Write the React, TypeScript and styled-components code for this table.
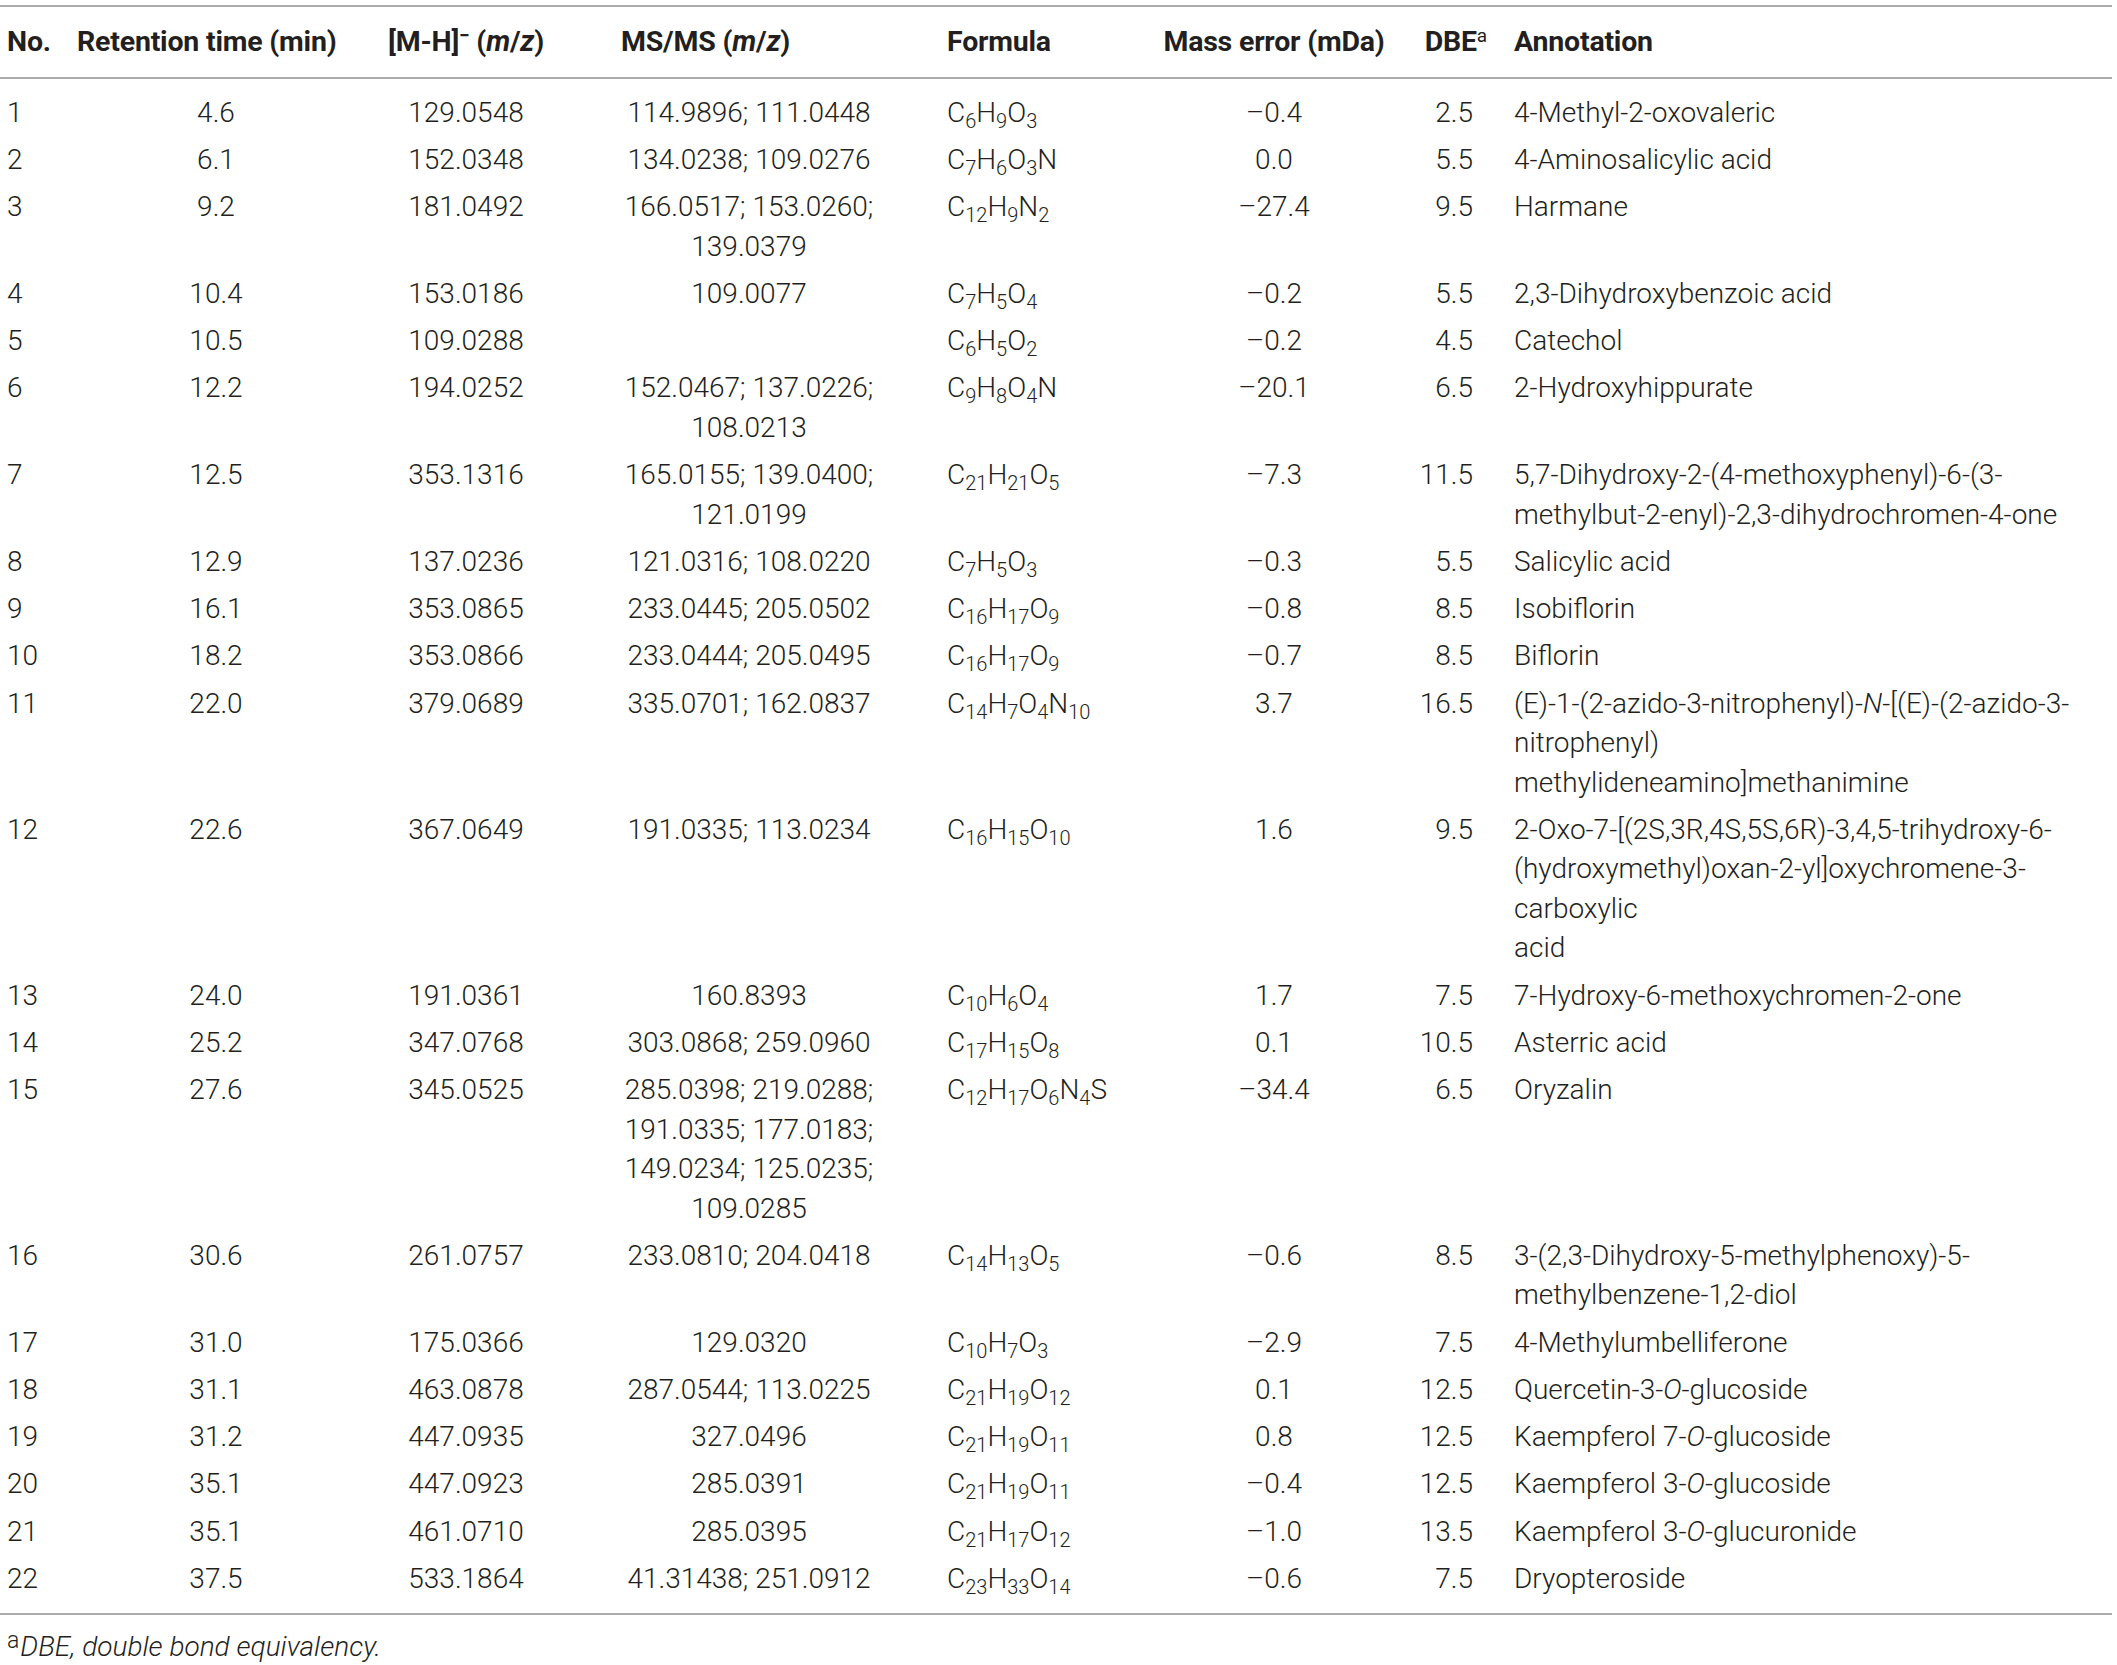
import React from "react";
import styled, { createGlobalStyle } from "styled-components";

const GlobalStyle = createGlobalStyle`
  html, body {
    margin: 0;
    padding: 0;
    background: #ffffff;
  }
  body {
    font-family: Roboto, "Liberation Sans", Arial, sans-serif;
    color: #231f20;
  }
`;

type Row = {
  no: string;
  rt: string;
  mh: string;
  msms: string[];
  formula: string;
  err: string;
  dbe: string;
  annotation: string[];
};

const rows: Row[] = [
  { no: "1", rt: "4.6", mh: "129.0548", msms: ["114.9896; 111.0448"], formula: "C6H9O3", err: "–0.4", dbe: "2.5", annotation: ["4-Methyl-2-oxovaleric"] },
  { no: "2", rt: "6.1", mh: "152.0348", msms: ["134.0238; 109.0276"], formula: "C7H6O3N", err: "0.0", dbe: "5.5", annotation: ["4-Aminosalicylic acid"] },
  { no: "3", rt: "9.2", mh: "181.0492", msms: ["166.0517; 153.0260;", "139.0379"], formula: "C12H9N2", err: "–27.4", dbe: "9.5", annotation: ["Harmane"] },
  { no: "4", rt: "10.4", mh: "153.0186", msms: ["109.0077"], formula: "C7H5O4", err: "–0.2", dbe: "5.5", annotation: ["2,3-Dihydroxybenzoic acid"] },
  { no: "5", rt: "10.5", mh: "109.0288", msms: [""], formula: "C6H5O2", err: "–0.2", dbe: "4.5", annotation: ["Catechol"] },
  { no: "6", rt: "12.2", mh: "194.0252", msms: ["152.0467; 137.0226;", "108.0213"], formula: "C9H8O4N", err: "–20.1", dbe: "6.5", annotation: ["2-Hydroxyhippurate"] },
  { no: "7", rt: "12.5", mh: "353.1316", msms: ["165.0155; 139.0400;", "121.0199"], formula: "C21H21O5", err: "–7.3", dbe: "11.5", annotation: ["5,7-Dihydroxy-2-(4-methoxyphenyl)-6-(3-", "methylbut-2-enyl)-2,3-dihydrochromen-4-one"] },
  { no: "8", rt: "12.9", mh: "137.0236", msms: ["121.0316; 108.0220"], formula: "C7H5O3", err: "–0.3", dbe: "5.5", annotation: ["Salicylic acid"] },
  { no: "9", rt: "16.1", mh: "353.0865", msms: ["233.0445; 205.0502"], formula: "C16H17O9", err: "–0.8", dbe: "8.5", annotation: ["Isobiflorin"] },
  { no: "10", rt: "18.2", mh: "353.0866", msms: ["233.0444; 205.0495"], formula: "C16H17O9", err: "–0.7", dbe: "8.5", annotation: ["Biflorin"] },
  { no: "11", rt: "22.0", mh: "379.0689", msms: ["335.0701; 162.0837"], formula: "C14H7O4N10", err: "3.7", dbe: "16.5", annotation: ["(E)-1-(2-azido-3-nitrophenyl)-*N*-[(E)-(2-azido-3-", "nitrophenyl)", "methylideneamino]methanimine"] },
  { no: "12", rt: "22.6", mh: "367.0649", msms: ["191.0335; 113.0234"], formula: "C16H15O10", err: "1.6", dbe: "9.5", annotation: ["2-Oxo-7-[(2S,3R,4S,5S,6R)-3,4,5-trihydroxy-6-", "(hydroxymethyl)oxan-2-yl]oxychromene-3-", "carboxylic", "acid"] },
  { no: "13", rt: "24.0", mh: "191.0361", msms: ["160.8393"], formula: "C10H6O4", err: "1.7", dbe: "7.5", annotation: ["7-Hydroxy-6-methoxychromen-2-one"] },
  { no: "14", rt: "25.2", mh: "347.0768", msms: ["303.0868; 259.0960"], formula: "C17H15O8", err: "0.1", dbe: "10.5", annotation: ["Asterric acid"] },
  { no: "15", rt: "27.6", mh: "345.0525", msms: ["285.0398; 219.0288;", "191.0335; 177.0183;", "149.0234; 125.0235;", "109.0285"], formula: "C12H17O6N4S", err: "–34.4", dbe: "6.5", annotation: ["Oryzalin"] },
  { no: "16", rt: "30.6", mh: "261.0757", msms: ["233.0810; 204.0418"], formula: "C14H13O5", err: "–0.6", dbe: "8.5", annotation: ["3-(2,3-Dihydroxy-5-methylphenoxy)-5-", "methylbenzene-1,2-diol"] },
  { no: "17", rt: "31.0", mh: "175.0366", msms: ["129.0320"], formula: "C10H7O3", err: "–2.9", dbe: "7.5", annotation: ["4-Methylumbelliferone"] },
  { no: "18", rt: "31.1", mh: "463.0878", msms: ["287.0544; 113.0225"], formula: "C21H19O12", err: "0.1", dbe: "12.5", annotation: ["Quercetin-3-*O*-glucoside"] },
  { no: "19", rt: "31.2", mh: "447.0935", msms: ["327.0496"], formula: "C21H19O11", err: "0.8", dbe: "12.5", annotation: ["Kaempferol 7-*O*-glucoside"] },
  { no: "20", rt: "35.1", mh: "447.0923", msms: ["285.0391"], formula: "C21H19O11", err: "–0.4", dbe: "12.5", annotation: ["Kaempferol 3-*O*-glucoside"] },
  { no: "21", rt: "35.1", mh: "461.0710", msms: ["285.0395"], formula: "C21H17O12", err: "–1.0", dbe: "13.5", annotation: ["Kaempferol 3-*O*-glucuronide"] },
  { no: "22", rt: "37.5", mh: "533.1864", msms: ["41.31438; 251.0912"], formula: "C23H33O14", err: "–0.6", dbe: "7.5", annotation: ["Dryopteroside"] },
];

const Page = styled.div`
  padding-top: 5px;
  width: 2112px;
`;

const Table = styled.table`
  width: 2112px;
  border-collapse: collapse;
  table-layout: fixed;
  font-size: 28px;
  font-weight: 300;
  line-height: 39.5px;
  color: #231f20;
`;

const Head = styled.thead`
  border-top: 2px solid #a9abae;
  border-bottom: 2px solid #a9abae;
`;

type Align = "left" | "center" | "right";

const Th = styled.th<{ $align?: Align; $pl?: number; $pr?: number }>`
  font-weight: 700;
  font-size: 28.5px;
  white-space: nowrap;
  text-align: ${(p) => p.$align ?? "left"};
  padding: 15px ${(p) => p.$pr ?? 0}px 15.5px ${(p) => p.$pl ?? 0}px;
  vertical-align: middle;
  letter-spacing: -0.2px;
`;

const Body = styled.tbody`
  border-bottom: 2px solid #a9abae;
  & > tr:first-child > td {
    padding-top: 13.5px;
  }
  & > tr:last-child > td {
    padding-bottom: 15px;
  }
`;

const Td = styled.td<{ $align?: Align; $pl?: number; $pr?: number }>`
  white-space: nowrap;
  text-align: ${(p) => p.$align ?? "left"};
  vertical-align: top;
  padding: 3.875px ${(p) => p.$pr ?? 0}px 3.875px ${(p) => p.$pl ?? 0}px;
`;

const Sup = styled.sup<{ $hang?: number }>`
  font-size: 19px;
  line-height: 0;
  vertical-align: 9px;
  margin-right: ${(p) => (p.$hang ? -p.$hang : 0)}px;
  font-weight: ${(p) => (p.$hang ? 400 : "inherit")};
`;

const NoteMark = styled.sup`
  font-size: 23px;
  font-weight: 300;
  line-height: 0;
  vertical-align: 8px;
  margin-right: 1px;
`;

const Sub = styled.sub`
  font-size: 20px;
  line-height: 0;
  vertical-align: -6px;
`;

const Em = styled.i`
  font-style: italic;
`;

const Footnote = styled.p`
  margin: 0;
  padding: 12px 0 0 7px;
  font-size: 28px;
  font-weight: 300;
  line-height: 39.5px;
  color: #231f20;
`;

const FootItalic = styled.span`
  font-style: italic;
`;

function Formula({ value }: { value: string }) {
  const parts = Array.from(value.matchAll(/([A-Z][a-z]?)(\d*)/g));
  return (
    <>
      {parts.map((m, i) => (
        <React.Fragment key={i}>
          {m[1]}
          {m[2] ? <Sub>{m[2]}</Sub> : null}
        </React.Fragment>
      ))}
    </>
  );
}

function Rich({ text }: { text: string }) {
  const segs = text.split("*");
  return (
    <>
      {segs.map((s, i) => (i % 2 === 1 ? <Em key={i}>{s}</Em> : <React.Fragment key={i}>{s}</React.Fragment>))}
    </>
  );
}

function Lines({ lines, rich }: { lines: string[]; rich?: boolean }) {
  return (
    <>
      {lines.map((l, i) => (
        <React.Fragment key={i}>
          {i > 0 ? <br /> : null}
          {rich ? <Rich text={l} /> : l}
        </React.Fragment>
      ))}
    </>
  );
}

export default function App() {
  return (
    <Page>
      <GlobalStyle />
      <Table>
        <colgroup>
          <col style={{ width: 77 }} />
          <col style={{ width: 278 }} />
          <col style={{ width: 222 }} />
          <col style={{ width: 344 }} />
          <col style={{ width: 233 }} />
          <col style={{ width: 240 }} />
          <col style={{ width: 120 }} />
          <col style={{ width: 598 }} />
        </colgroup>
        <Head>
          <tr>
            <Th $pl={7}>No.</Th>
            <Th>Retention time (min)</Th>
            <Th $align="center">
              [M-H]<Sup>−</Sup> (<Em>m</Em>/<Em>z</Em>)
            </Th>
            <Th $pl={44}>
              MS/MS (<Em>m</Em>/<Em>z</Em>)
            </Th>
            <Th $pl={26}>Formula</Th>
            <Th $align="center">Mass error (mDa)</Th>
            <Th $align="right" $pr={41}>
              DBE<Sup $hang={14}>a</Sup>
            </Th>
            <Th>Annotation</Th>
          </tr>
        </Head>
        <Body>
          {rows.map((r) => (
            <tr key={r.no}>
              <Td $pl={7}>{r.no}</Td>
              <Td $align="center">{r.rt}</Td>
              <Td $align="center">{r.mh}</Td>
              <Td $align="center">
                <Lines lines={r.msms} />
              </Td>
              <Td $pl={26}>
                <Formula value={r.formula} />
              </Td>
              <Td $align="center">{r.err}</Td>
              <Td $align="right" $pr={41}>
                {r.dbe}
              </Td>
              <Td>
                <Lines lines={r.annotation} rich />
              </Td>
            </tr>
          ))}
        </Body>
      </Table>
      <Footnote>
        <NoteMark>a</NoteMark>
        <FootItalic>DBE, double bond equivalency.</FootItalic>
      </Footnote>
    </Page>
  );
}
